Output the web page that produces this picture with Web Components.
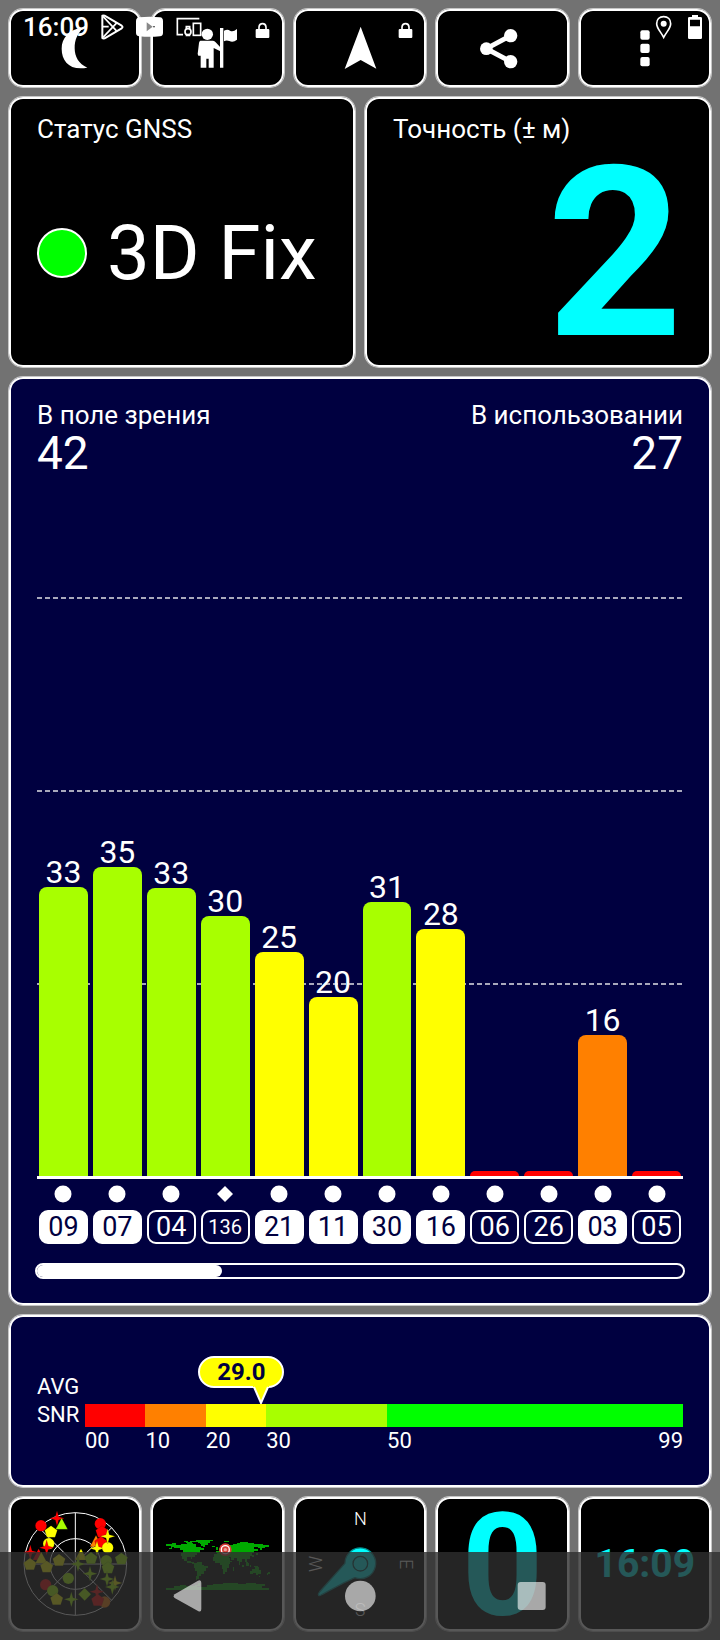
<!DOCTYPE html>
<html lang="ru">
<head>
<meta charset="utf-8">
<meta name="viewport" content="width=device-width, initial-scale=1">
<title>Статус GNSS</title>
<style>
  body { margin: 0; background: #727272; color: #fff; font-family: Roboto, "Noto Sans", sans-serif; }
</style>
</head>
<body>
<gnss-app></gnss-app>

<script>
/* White frame with a soft outer pixel, shared by tiles and panels */
const FRAME = `border: 1px solid rgba(255, 255, 255, .6); box-shadow: inset 0 0 0 2px #fff; border-radius: 15px;
  background-clip: padding-box; box-sizing: border-box;`;

const define = (name, html, setup) => {
  const template = document.createElement('template');
  template.innerHTML = html;
  customElements.define(name, class extends HTMLElement {
    constructor() {
      super();
      this.attachShadow({ mode: 'open' }).append(template.content.cloneNode(true));
    }
    connectedCallback() {
      if (setup && !this.ready) { this.ready = true; setup(this, this.shadowRoot); }
    }
  });
};

/* Framed push button holding one drawing or one value */
define('tool-tile', `
<style>
  :host { display: block; min-width: 0; }
  button { display: flex; align-items: center; justify-content: center; width: 100%; height: 100%;
    margin: 0; padding: 0; background-color: #000; color: inherit; font: inherit; ${FRAME} }
</style>
<button type="button"><slot></slot></button>`, (el, root) => {
  root.querySelector('button').setAttribute('aria-label', el.getAttribute('label'));
});

/* Titled card */
define('info-card', `
<style>
  :host { display: flex; flex-direction: column; min-width: 0; padding: 17px 28px 6px; background-color: #000; ${FRAME} }
  h2 { margin: 0; font-size: 26px; line-height: 30px; font-weight: 400; }
  div { flex: 1; display: flex; align-items: center; }
  :host([side="right"]) div { justify-content: flex-end; }
</style>
<h2><slot name="title"></slot></h2>
<div><slot></slot></div>`);

define('fix-state', `
<style>
  :host { display: flex; align-items: center; gap: 20px; font-size: 76px; line-height: 90px; }
  i { box-sizing: border-box; width: 50px; height: 50px; border: 2px solid #fff; border-radius: 50%; background: #0f0; }
</style>
<i></i><span><slot></slot></span>`);

define('big-value', `
<style>
  :host { display: block; color: #0ff; font-weight: 700; font-size: 238px; line-height: 200px; }
  :host(:not([size])) { padding-top: 3px; }
  :host([size="tile"]) { font-size: 142px; line-height: 124px; padding-top: 5px; }
  :host([size="clock"]) { font-size: 39px; line-height: 44px; }
</style>
<slot></slot>`);

define('satellite-chart', `
<style>
  :host { display: flex; flex-direction: column; min-width: 0; padding: 23px 28px 26px; background-color: #000040; ${FRAME} }
  header { display: flex; justify-content: space-between; font-size: 26px; line-height: 30px; }
  header div:last-child { text-align: right; }
  strong { display: block; font-size: 46px; line-height: 46px; font-weight: 400; }
  .plot { position: relative; flex: 1; min-height: 700px; border-bottom: 3px solid #fff; display: grid; }
  .line { position: absolute; left: 0; right: 0; height: 2px;
    background: repeating-linear-gradient(90deg, #a8a8bc 0 5px, transparent 5px 8px); }
  .row { display: grid; grid-template-columns: repeat(12, 1fr); gap: 5px; padding: 0 2px; }
  .bars { position: relative; align-items: end; }
  .bar { font-size: 32px; line-height: 30px; text-align: center; }
  .bar i { display: block; border-radius: 8px 8px 0 0; }
  .marks { padding-top: 7px; }
  .mark { display: flex; flex-direction: column; align-items: center; gap: 8px; }
  .mark svg { width: 18px; height: 16px; }
  .chip { box-sizing: border-box; width: 100%; height: 34px; border: 2px solid #fff; border-radius: 9px; text-align: center;
    font-size: 27px; line-height: 31px; }
  .chip.used { background: #fff; color: #000040; }
  .chip.long { font-size: 20px; }
  .scroll { box-sizing: border-box; height: 16px; margin: 19px -2px 0; border: 2px solid #fff; border-radius: 8px; overflow: hidden; }
  .scroll i { display: block; width: 28.6%; height: 100%; background: #fff; border-radius: 0 6px 6px 0; }
</style>
<header>
  <div>В поле зрения<strong>42</strong></div>
  <div>В использовании<strong>27</strong></div>
</header>
<div class="plot">
  <div class="line" style="bottom:577px"></div>
  <div class="line" style="bottom:384px"></div>
  <div class="line" style="bottom:191px"></div>
  <div class="row bars"></div>
</div>
<div class="row marks"></div>
<div class="scroll"><i></i></div>`, (el, root) => {
  const lime = '#a8ff00', yellow = '#ff0', orange = '#ff8000', red = '#f00';
  const satellites = [
    ['09', 33, 289, lime, 1], ['07', 35, 309, lime, 1], ['04', 33, 288, lime, 0], ['136', 30, 260, lime, 0],
    ['21', 25, 224, yellow, 1], ['11', 20, 179, yellow, 1], ['30', 31, 274, lime, 1], ['16', 28, 247, yellow, 1],
    ['06', '', 5, red, 0], ['26', '', 5, red, 0], ['03', 16, 141, orange, 1], ['05', '', 5, red, 0]
  ];
  const circle = '<circle cx="9" cy="8" r="8.5"/>', diamond = '<path d="M9 0L17 8L9 16L1 8Z"/>';
  root.querySelector('.bars').innerHTML = satellites.map(([, snr, h, color]) =>
    `<div class="bar">${snr}<i style="height:${h}px;background:${color}"></i></div>`).join('');
  root.querySelector('.marks').innerHTML = satellites.map(([id, , , , used]) =>
    `<div class="mark"><svg viewBox="0 0 18 16" overflow="visible" fill="#fff">${id.length > 2 ? diamond : circle}</svg>
     <div class="chip${used ? ' used' : ''}${id.length > 2 ? ' long' : ''}">${id}</div></div>`).join('');
});

define('snr-gauge', `
<style>
  :host { display: grid; grid-template-columns: 48px 1fr; padding: 58px 28px 32px; background-color: #000040;
    font-size: 22px; line-height: 28px; ${FRAME} }
  .scale { padding-top: 31px; }
  .bar { position: relative; height: 23px; }
  .split { display: grid; grid-template-columns: 10fr 10fr 10fr 20fr 49fr; }
  .bar .split { height: 100%; }
  .ends { display: flex; justify-content: space-between; }
  .tip { position: absolute; left: 29%; bottom: 100%; width: 86px; margin-left: -60px; }
  .tip span { display: block; box-sizing: border-box; height: 32px; border: 2px solid #fff; border-radius: 16px; background: #ff0;
    color: #000040; font-weight: 700; font-size: 24px; line-height: 28px; text-align: center; }
  .tip svg { display: block; width: 16px; height: 19px; margin: -3px 0 0 55px; }
</style>
<div>AVG<br>SNR</div>
<div class="scale">
  <div class="bar">
    <div class="split">
      <i style="background:#f00"></i><i style="background:#ff8000"></i><i style="background:#ff0"></i>
      <i style="background:#a8ff00"></i><i style="background:#0f0"></i>
    </div>
    <div class="tip"><span>29.0</span>
      <svg viewBox="0 0 16 19"><path d="M0 1H16V2H15L8 18L1 2H0Z" fill="#ff0"/><path d="M1 2L8 18L15 2" fill="none" stroke="#fff" stroke-width="2"/></svg>
    </div>
  </div>
  <div class="split">
    <span>00</span><span>10</span><span>20</span><span>30</span><span class="ends"><span>50</span><span>99</span></span>
  </div>
</div>`);

/* System status bar laid over the toolbar */
define('status-bar', `
<style>
  :host { display: flex; align-items: center; gap: 12px; box-sizing: border-box; height: 54px; padding: 0 18px 0 23px; pointer-events: none;
    font-size: 26px; line-height: 30px; font-weight: 500; }
  svg { height: 26px; flex: none; }
  .end { display: flex; gap: 16px; margin-left: auto; }
</style>
<span>16:09</span>
<svg width="23" viewBox="302 42 69 78" fill="none" stroke="#fff" stroke-width="6" stroke-linejoin="round">
  <path d="M306 47Q312 46 318 50L364 77Q369 81 364 85L318 112Q310 117 306 114Z"/><path d="M308 49L350 94M308 112L350 68M308 80H325" stroke-width="5"/>
</svg>
<svg width="27" viewBox="408 42 81 78"><path d="M418 52Q448 49 480 52Q489 53 489 64V98Q489 108 480 109Q448 112 418 109Q408 108 408 98V64Q408 53 418 52Z" fill="#fff"/>
  <path d="M440 67L458 80L440 94Z" fill="#888"/><rect x="460" y="78" width="4" height="4" fill="#222"/></svg>
<svg width="26" viewBox="528 42 78 78" fill="none" stroke="#fff" stroke-width="5" overflow="visible">
  <path d="M601 56H535V104H552"/><circle cx="567" cy="95" r="9"/><path d="M562 86V80H572V86M560 106H574"/><rect x="583" y="70" width="22" height="36"/>
</svg>
<div class="end">
  <svg width="17" viewBox="1126 42 51 78" fill="none" stroke="#fff" stroke-width="5"><path d="M1152 50C1139 50 1131 59 1131 71C1131 85 1144 96 1152 112C1160 96 1173 85 1173 71C1173 59 1165 50 1152 50Z"/><circle cx="1152" cy="71" r="9" fill="#fff" stroke="none"/></svg>
  <svg width="14" viewBox="1224 42 42 78"><path fill="#fff" fill-rule="evenodd" d="M1236 45H1254V51H1262Q1266 51 1266 55V113Q1266 117 1262 117H1228Q1224 117 1224 113V55Q1224 51 1228 51H1236ZM1230 59V79H1260V59Z"/></svg>
</div>`);

/* System navigation laid over the bottom tiles */
define('nav-bar', `
<style>
  :host { display: grid; grid-template-columns: repeat(3, 1fr); justify-items: center; align-items: center; box-sizing: border-box;
    height: 88px; padding: 0 14%; background: rgba(46, 46, 46, .8); }
  button { display: block; padding: 0; border: 0; background: none; }
  svg { display: block; width: 32px; height: 32px; fill: #fff; opacity: .6; }
</style>
<button type="button" aria-label="Назад"><svg viewBox="-5 0 96 96"><path d="M6 43L76 2Q86 -2 86 9V87Q86 98 76 93L6 54Q0 49 6 43Z"/></svg></button>
<button type="button" aria-label="Домой"><svg viewBox="0 0 96 96"><circle cx="49" cy="48" r="46"/></svg></button>
<button type="button" aria-label="Обзор"><svg viewBox="0 0 96 96"><rect x="2" y="6" width="84" height="84" rx="9"/></svg></button>`);

const LOCK = (x) => `<path fill="#fff" d="M${x} 90Q${x} 87 ${x + 3} 87H${x + 38}Q${x + 41} 87 ${x + 41} 90V111Q${x + 41} 114 ${x + 38} 114H${x + 3}Q${x} 114 ${x} 111Z"/>
  <path fill="none" stroke="#fff" stroke-width="5" d="M${x + 10} 88V81Q${x + 11} 71 ${x + 21} 71Q${x + 30} 71 ${x + 31} 81V88"/>`;

/* All drawings share the same 3:1 unit grid as their tiles */
const DRAWINGS = {
  moon: ['33 33 384 222', '<path fill="#fff" d="M252 81C205 88 185 115 185 146C185 184 210 213 262 203C236 192 224 170 224 145C224 119 232 101 252 81Z"/>'],
  scout: ['463 33 384 222', `<g fill="#fff"><circle cx="623" cy="103" r="17"/>
    <path d="M602 122H640Q645 122 648 127L662 142V154L642 144V203H627V176H620V203H603V167H596L594 162L598 129Q599 123 602 122Z"/>
    <path d="M661 84H671V203H661ZM673 92Q684 87 691 92Q700 97 712 87V119Q700 129 689 123Q680 119 673 124Z"/></g>${LOCK(768)}`],
  arrow: ['47 33 384 222', `<path fill="#fff" d="M241 80L288 206L241 180L193 207Z"/>${LOCK(355)}`],
  share: ['475 33 384 222', '<g fill="#fff"><circle cx="620" cy="146" r="19"/><circle cx="693" cy="107" r="20"/><circle cx="693" cy="185" r="20"/></g><path d="M693 107L620 146L693 185" fill="none" stroke="#fff" stroke-width="15"/>'],
  more: ['902 33 384 222', '<g fill="#fff"><rect x="1080" y="91" width="28" height="28" rx="6"/><rect x="1080" y="131" width="28" height="28" rx="6"/><rect x="1080" y="171" width="28" height="28" rx="6"/></g>'],
  map: ['463 42 384 390', `<g fill="#0a0" shape-rendering="crispEdges">
    <path d="M500 178H516V175H530V179H545V176H562V173H580V177H590V185H604V178H600V174H610V182H604V190H612V196H602V203H592V209H585V216H577V222H573V217H563V227H573V232H582V237H576V234H563V229H554V222H548V214H544V203H549V196H540V188H524V187H516V192H508V189H514V184H500Z"/>
    <path d="M572 168H590V166H640V168H632V175H624V179H617V185H611V180H608V173H596V170H572Z"/><path d="M552 168H564V171H578V174H560V171H552Z"/>
    <path d="M584 235H592V232H606V239H614V244H624V250H619V259H612V267H604V273H598V281H593V284H589V272H591V258H587V250H582V243Z"/>
    <path d="M644 207H652V203H668V206H682V211H688V220H692V227H698V231H692V238H687V250H682V261H676V266H669V253H666V239H660V233H646V228H640V216H644Z"/>
    <path d="M649 197H658V190H668V184H674V177H688V181H700V178H712V175H722V172H744V175H762V178H790V180H808V185H796V188H786V195H782V190H774V187H764V192H774V199H764V205H758V211H764V217H756V213H750V223H743V231H746V238H740V232H735V222H727V230H722V239H717V228H712V218H704V224H694V215H688V207H682V202H672V200H664V204H649Z"/>
    <path d="M638 183H646V187H638ZM650 187H656V194H650ZM672 167H688V170H672ZM712 167H724V169H712ZM770 203H776V211H770ZM700 247H704V258H699V252H700ZM726 240H734V246H728V244H726ZM738 235H747V243H740V240H738ZM750 241H755V247H750ZM762 243H776V249H766V246H762Z"/>
    <path d="M752 257H758V252H766V250H774V247H778V254H783V262H784V268H776V271H769V265H761V267H752ZM806 262H810V266H806V271H800V269H803V265H806ZM778 273H782V276H778Z"/>
    <path d="M498 310H524V304H542V300H560V303H586V300H596V294H600V302H592V306H622V300H640V297H670V295H716V298H740V295H770V298H796V304H786V309H808V314H498Z"/></g>
    <circle cx="677" cy="194" r="19" fill="#e33c3c" opacity=".95"/><circle cx="677" cy="194" r="12" fill="none" stroke="#fff" stroke-width="4"/><circle cx="677" cy="194" r="5" fill="#fff" opacity=".5"/>`],
  compass: ['47 42 384 390', `<path d="M115 331C112 326 114 325 120 318L194 235V233A46 46 0 1 1 224 278Q205 285 126 328Q118 334 115 331Z" fill="#0ff" stroke="#008c8c" stroke-width="4"/>
    <circle cx="240" cy="236" r="22" fill="none" stroke="#004c4c" stroke-width="4"/>
    <g fill="#fff" font-size="54" text-anchor="middle" font-weight="300"><text x="240" y="119">N</text><text transform="translate(358 237) rotate(90)">E</text>
    <text transform="translate(240 354) rotate(180)">S</text><text transform="translate(124 237) rotate(-90)">W</text></g>`]
};

DRAWINGS.sky = ['33 42 384 390', (() => {
  const shapes = {
    c: '<circle r="17"/>', p: '<path d="M0-19L19-5L12 16H-12L-19-5Z"/>', t: '<path d="M0-19L18 15H-18Z"/>',
    s: '<path d="M0-23L5-5L22 0L5 5L0 23L-5 5L-22 0L-5-5Z"/>', d: '<path d="M0-19L19 0L0 19L-19 0Z"/>'
  };
  const colors = { r: '#f00', y: '#ff0', g: '#a8ff00', o: '#ff8000' };
  const points = `cr123,122 sr171,100 tg185,118 cy146,176 py153,141 tr116,210 sr140,188 sr91,202 cr301,116 pr306,141 to288,170
    pr303,173 sy291,190 cy323,188 sy323,154 ty243,210 py90,238 ty124,220 py140,246 py177,226 sg234,237 pg273,220 cg319,227 pg364,222
    pg324,249 sg270,266 cg205,280 sg321,282 sy345,294 sg337,306 cr137,299 cg158,317 py170,343 sg214,343 dg254,328 sr291,320 co314,351 pr293,346`;
  return `<g fill="none" stroke="#fff" stroke-width="3"><circle cx="226" cy="237" r="154"/><circle cx="226" cy="237" r="76"/>
    <path d="M226 83V391M72 237H380M117 128L335 346M335 128L117 346"/></g><g stroke="#0006" stroke-width="1">` +
    points.split(/\s+/).map(p => `<g transform="translate(${p.slice(2)})" fill="${colors[p[1]]}">${shapes[p[0]]}</g>`).join('') + '</g>';
})()];

define('tile-art', `
<style>
  :host { display: block; width: 128px; }
  svg { display: block; width: 100%; }
</style>`, (el, root) => {
  const [box, art] = DRAWINGS[el.getAttribute('name')];
  root.innerHTML += `<svg viewBox="${box}" aria-hidden="true">${art}</svg>`;
});

define('gnss-app', `
<style>
  :host { display: block; position: relative; }
  main { display: grid; grid-template-rows: 80px 272px 1fr auto 136px; gap: 8px; box-sizing: border-box; min-height: 100vh; padding: 8px; }
  .five { display: grid; grid-template-columns: repeat(5, 1fr); gap: 8px; }
  .two { display: grid; grid-template-columns: 1fr 1fr; gap: 8px; }
  status-bar { position: absolute; top: 0; left: 0; right: 0; }
  nav-bar { position: absolute; bottom: 0; left: 0; right: 0; }
</style>
<main>
  <div class="five">
    <tool-tile label="Ночной режим"><tile-art name="moon"></tile-art></tool-tile>
    <tool-tile label="Маршрут"><tile-art name="scout"></tile-art></tool-tile>
    <tool-tile label="Навигация"><tile-art name="arrow"></tile-art></tool-tile>
    <tool-tile label="Поделиться"><tile-art name="share"></tile-art></tool-tile>
    <tool-tile label="Меню"><tile-art name="more"></tile-art></tool-tile>
  </div>
  <div class="two">
    <info-card><span slot="title">Статус GNSS</span><fix-state>3D Fix</fix-state></info-card>
    <info-card side="right"><span slot="title">Точность (± м)</span><big-value>2</big-value></info-card>
  </div>
  <satellite-chart></satellite-chart>
  <snr-gauge></snr-gauge>
  <div class="five">
    <tool-tile label="Небо"><tile-art name="sky"></tile-art></tool-tile>
    <tool-tile label="Карта"><tile-art name="map"></tile-art></tool-tile>
    <tool-tile label="Компас"><tile-art name="compass"></tile-art></tool-tile>
    <tool-tile label="Скорость"><big-value size="tile">0</big-value></tool-tile>
    <tool-tile label="Время"><big-value size="clock">16:09</big-value></tool-tile>
  </div>
</main>
<status-bar></status-bar>
<nav-bar></nav-bar>`);
</script>
</body>
</html>
